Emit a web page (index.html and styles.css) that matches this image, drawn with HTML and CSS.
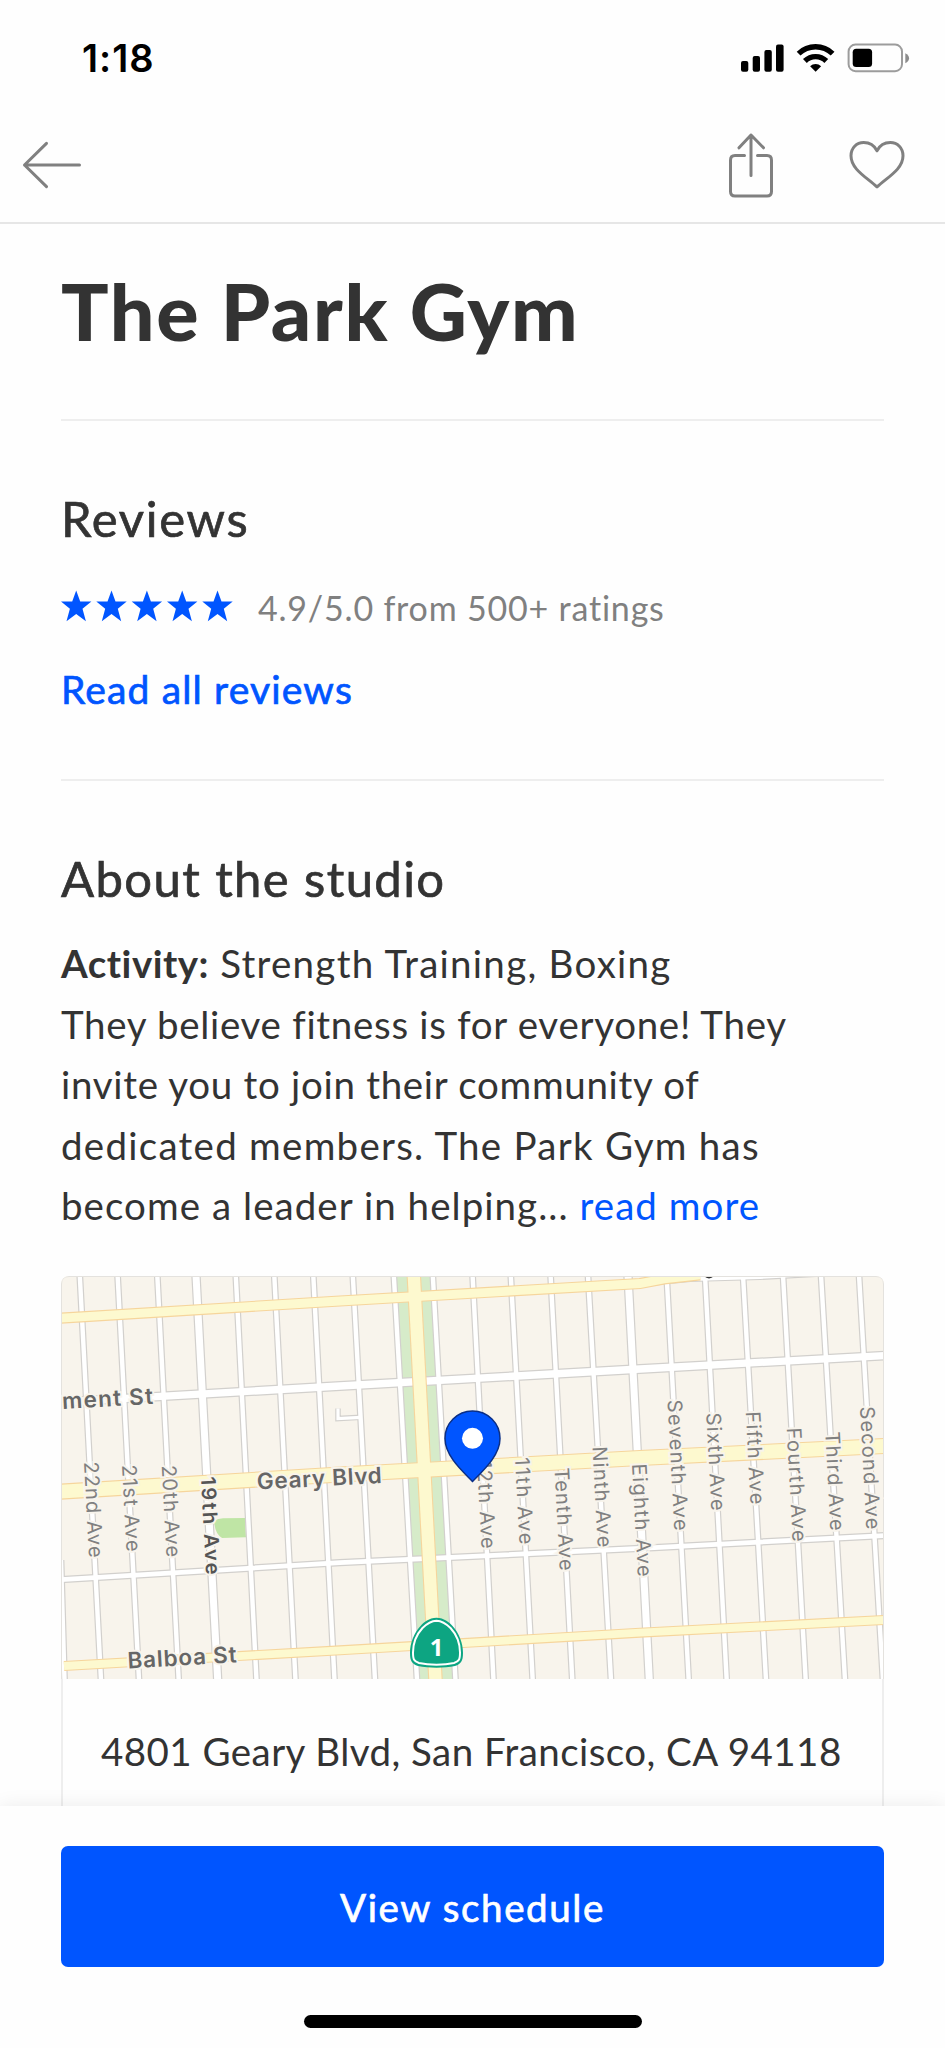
FILE: index.html
```html
<!DOCTYPE html>
<html lang="en">
<head>
<meta charset="utf-8">
<title>The Park Gym</title>
<link rel="stylesheet" href="styles.css">
</head>
<body>
<div class="screen">
  <div class="status">
    <span class="time">1:18</span>
    <svg class="indicators" width="170" height="32" viewBox="740 42 170 32">
      <rect x="741" y="61" width="7.3" height="10.7" rx="2"/>
      <rect x="752.7" y="56" width="7.3" height="15.7" rx="2"/>
      <rect x="764.4" y="50" width="7.4" height="21.7" rx="2"/>
      <rect x="776" y="44.6" width="7.6" height="27.1" rx="2"/>
      <g fill="none" stroke="#000" stroke-width="5.4">
        <path d="M798.6 53.6A24.5 24.5 0 0 1 832.6 53.6"/>
        <path d="M804.9 61A15.2 15.2 0 0 1 826.3 61"/>
      </g>
      <path d="M810.1 66.3A8 8 0 0 1 821.1 66.3L815.6 71.8Z"/>
      <rect x="848.6" y="44.6" width="53.4" height="26.6" rx="7" fill="none" stroke="#9c9c9c" stroke-width="2"/>
      <rect x="852.7" y="48.8" width="19.4" height="18.3" rx="3.5"/>
      <path d="M905.3 53.2C910.3 55.3 910.3 61.1 905.3 63.2Z" fill="#8c8c8c"/>
    </svg>
  </div>
  <header class="nav">
    <svg class="icon back" width="60" height="48" viewBox="22 142 60 48"><path d="M79.5 166H24.5M46.5 144.4L24.5 166L46.5 187.6"/></svg>
    <svg class="icon share" width="48" height="68" viewBox="727 131 48 68"><path d="M751 175.5V135M739 147.8L751 135L763.5 147.8M744.5 155.6H735Q730.5 155.6 730.5 160.2V191.5Q730.5 196 735 196H767Q771.5 196 771.5 191.5V160.2Q771.5 155.6 767 155.6H757.5"/></svg>
    <svg class="icon heart" width="60" height="52" viewBox="847 140 60 52"><path d="M877 188C867 178.5 851 170.5 851 156.8C851 149 856.5 143.6 863.7 143.6C870 143.6 874.5 147 877 151.8C879.5 147 884 143.6 890.3 143.6C897.5 143.6 903 149 903 156.8C903 170.5 887 178.5 877 188Z"/></svg>
  </header>
  <main class="content">
    <h1 class="title">The Park Gym</h1>
    <hr class="rule">
    <h2 class="heading">Reviews</h2>
    <div class="rating">
      <svg class="stars" width="172" height="32" viewBox="61 590 172 32">
        <defs><path id="star" d="M15.2 0L19.2 11H30.4L21.5 18.3L24.9 30.8L15.2 23.5L5.5 30.8L8.9 18.3L0 11H11.2Z"/></defs>
        <use href="#star" x="61" y="590.5"/><use href="#star" x="96.3" y="590.5"/><use href="#star" x="131.7" y="590.5"/><use href="#star" x="167" y="590.5"/><use href="#star" x="202.3" y="590.5"/>
      </svg>
      <span>4.9/5.0 from 500+ ratings</span>
    </div>
    <a class="all-reviews">Read all reviews</a>
    <hr class="rule">
    <h2 class="heading studio">About the studio</h2>
    <p class="about">
      <span class="line wide"><b>Activity:</b> Strength Training, Boxing</span>
      <span class="line">They believe fitness is for everyone! They</span>
      <span class="line">invite you to join their community of</span>
      <span class="line wide">dedicated members. The Park Gym has</span>
      <span class="line loose">become a leader in helping... <a>read more</a></span>
    </p>
    <section class="card">
      <svg class="map" width="823" height="403" viewBox="61 1276 823 403">
        <defs>
          <path id="avenues" d="M61 1560L64.5 1680M79.5 1270L101 1680M117.3 1270L139 1680M157 1270L178.7 1680M235.5 1270L256.5 1680M274 1270L295.5 1680M313 1270L334.5 1680M352.5 1270L375 1680M393.5 1270L417 1680M432.5 1270L455.5 1680M472.3 1270L493.5 1680M510.5 1270L532.7 1680M550.3 1270L572.3 1680M587.7 1270L611 1680M666.3 1270L688.7 1680M704.7 1270L726.7 1680M742.7 1270L766 1680M782.7 1270L805.7 1680M820.7 1270L845 1680M858.7 1270L883 1680"/>
          <path id="wide-avenues" d="M195.7 1270L217.7 1680M627.7 1270L649.3 1680"/>
          <path id="clement" d="M55 1402.5L340 1386L640 1369L890 1355.3"/>
          <path id="anza" d="M55 1580L340 1562.7L640 1548.3L890 1535.3"/>
          <path id="lake" d="M640 1283L690 1278L760 1276L890 1269"/>
          <path id="lane" d="M338 1408.5V1418.5L361 1417.3"/>
          <path id="california" d="M55 1318.5L340 1301L640 1283.5L664 1279L700 1275"/>
          <path id="geary" d="M55 1492L340 1474.5L640 1458L890 1445.7"/>
          <path id="balboa" d="M64 1666L340 1650.3L640 1632.7L890 1619.7"/>
          <path id="highway" d="M413.5 1270L435.5 1680"/>
        </defs>
        <rect x="61" y="1276" width="823" height="403" fill="#f8f4ec"/>
        <path d="M395 1270H431.5L454 1680H417Z" fill="#d6ebc9"/>
        <path d="M214 1521Q218 1518.5 223 1518.3L245 1518L246 1537.3L222 1538Q215 1534 214 1521Z" fill="#bfe5a5"/>
        <g class="edge">
          <use href="#lane" stroke-width="5.5"/><use href="#avenues" stroke-width="6.8"/><use href="#wide-avenues" stroke-width="9.4"/>
          <use href="#clement" stroke-width="9.8"/><use href="#anza" stroke-width="7.2"/><use href="#lake" stroke-width="8"/>
        </g>
        <g class="street">
          <use href="#lane" stroke-width="3.2"/><use href="#avenues" stroke-width="4.4"/><use href="#wide-avenues" stroke-width="7"/>
          <use href="#clement" stroke-width="7.3"/><use href="#anza" stroke-width="4.8"/><use href="#lake" stroke-width="5.8"/>
        </g>
        <g class="artery-edge">
          <use href="#california" stroke-width="11"/><use href="#geary" stroke-width="16"/><use href="#balboa" stroke-width="10"/><use href="#highway" stroke-width="14.5"/>
        </g>
        <g class="artery">
          <use href="#california" stroke-width="8.8"/><use href="#geary" stroke-width="13.8"/><use href="#balboa" stroke-width="7.8"/><use href="#highway" stroke-width="12.3"/>
        </g>
        <path d="M704 1276.3Q709 1280.5 714 1276.3Z" fill="#333"/>
        <path d="M61.5 1679V1284Q61.5 1276.5 69 1276.5H876Q883.5 1276.5 883.5 1284V1679" fill="none" stroke="#e4e2de"/>
        <g class="ave">
          <text textLength="96" transform="translate(84 1462) rotate(87)">22nd Ave</text>
          <text textLength="87" transform="translate(122 1465) rotate(87)">21st Ave</text>
          <text textLength="92" transform="translate(161.7 1465.5) rotate(87)">20th Ave</text>
          <text textLength="88" transform="translate(477 1461) rotate(87)">12th Ave</text>
          <text textLength="87" transform="translate(515 1457.7) rotate(87)">11th Ave</text>
          <text textLength="103" transform="translate(554.5 1468) rotate(87)">Tenth Ave</text>
          <text textLength="101" transform="translate(592.5 1446.7) rotate(87)">Ninth Ave</text>
          <text textLength="113" transform="translate(632 1464) rotate(87)">Eighth Ave</text>
          <text textLength="131" transform="translate(667.5 1400) rotate(87)">Seventh Ave</text>
          <text textLength="98" transform="translate(706.3 1413) rotate(87)">Sixth Ave</text>
          <text textLength="93" transform="translate(745.7 1411.7) rotate(87)">Fifth Ave</text>
          <text textLength="114" transform="translate(786.7 1428) rotate(87)">Fourth Ave</text>
          <text textLength="99" transform="translate(825.3 1432) rotate(87)">Third Ave</text>
          <text textLength="123" transform="translate(860 1406.7) rotate(87)">Second Ave</text>
        </g>
        <g class="major">
          <text class="dark" textLength="98" transform="translate(201 1477) rotate(87)">19th Ave</text>
          <text textLength="91" transform="translate(62.5 1409) rotate(-3.3)">ment St</text>
          <text textLength="125" transform="translate(257.3 1489.5) rotate(-3)">Geary Blvd</text>
          <text textLength="109" transform="translate(128 1668.5) rotate(-3.3)">Balboa St</text>
        </g>
        <path d="M436.5 1617.7C444 1618 449 1622 452.5 1626C459 1633 463 1643 463 1653C463 1661 461 1664 455 1666C444 1668.3 429 1668.3 418 1666C412 1664 410 1661 410 1653C410 1643 414 1633 420.5 1626C424 1622 429 1618 436.5 1617.7Z" fill="#0da582"/>
        <path d="M436.5 1620.7C443 1621 447 1624.5 450.5 1628C456.5 1634.5 460 1644 460 1652.5C460 1659.5 459 1661.5 454 1663C444 1665.2 429 1665.2 419 1663C414 1661.500 413 1659.5 413 1652.5C413 1644 416.5 1634.5 422.5 1628C426 1624.5 430 1621 436.5 1620.7Z" fill="none" stroke="#fff" stroke-width="2"/>
        <text class="route" x="436.5" y="1655.5">1</text>
        <path d="M472.5 1481.5C464 1472.5 445 1456.5 445 1438.5A27.5 27.5 0 0 1 500 1438.5C500 1456.5 481 1472.5 472.5 1481.5Z" fill="#0055ff" stroke="#0b2f86" stroke-width="1.5"/>
        <circle cx="472.5" cy="1438.3" r="10.5" fill="#fff"/>
      </svg>
      <p class="address">4801 Geary Blvd, San Francisco, CA 94118</p>
    </section>
  </main>
  <footer class="dock">
    <button class="cta">View schedule</button>
    <div class="home"></div>
  </footer>
</div>
</body>
</html>
```
FILE: styles.css
```css
* { box-sizing: border-box; }
body { margin: 0; background: #fefefe; color: #333; font-family: Lato, "Open Sans", sans-serif; }
h1, h2, p { margin: 0; font-weight: 400; }
svg { display: block; }
.screen { display: flex; flex-direction: column; width: 945px; height: 2048px; overflow: hidden; }

.status { display: flex; justify-content: space-between; align-items: center; flex: none; height: 116px; padding: 0 35px 0 82px; }
.time { font: 600 38px/44px Inter, sans-serif; letter-spacing: 1px; color: #000; }
.indicators { fill: #000; }

.nav { display: flex; align-items: center; flex: none; height: 108px; padding: 0 38px 8px 22px; border-bottom: 2px solid #e6e6e6; }
.icon { fill: none; stroke: #808080; stroke-width: 3; stroke-linecap: round; stroke-linejoin: round; }
.share { margin-left: auto; margin-right: 72px; }

.content { flex: 1; min-height: 0; overflow: hidden; padding: 42px 61px 0; }
.title { font-size: 79px; line-height: 90px; font-weight: 900; letter-spacing: 1.7px; margin-bottom: 63px; white-space: nowrap; }
.rule { height: 2px; margin: 0; border: 0; background: #eee; }
.heading { font-size: 49px; line-height: 60px; letter-spacing: 1.7px; margin-top: 67px; white-space: nowrap; -webkit-text-stroke: 0.7px; }
.studio { letter-spacing: 1.4px; }
.rating { display: flex; align-items: center; gap: 25px; margin-top: 40px; font-size: 34px; line-height: 40px; letter-spacing: 0.8px; color: #808080; white-space: nowrap; }
.stars { fill: #0055ff; margin-bottom: 4px; }
.all-reviews { display: block; margin: 37px 0 66px; font-size: 39px; line-height: 48px; letter-spacing: 1.15px; color: #0055ff; -webkit-text-stroke: 0.7px; }

.about { display: flex; flex-direction: column; margin-top: 25px; font-size: 38.5px; line-height: 60.5px; }
.about b { font-weight: 700; letter-spacing: 0.5px; }
.about a { color: #0055ff; }
.line { white-space: nowrap; letter-spacing: 0.7px; }
.wide { letter-spacing: 1.27px; }
.loose { letter-spacing: 1.05px; }

.card { margin-top: 40.5px; height: 700px; border-radius: 8px; overflow: hidden; }
.address { height: 297px; border: solid #eee; border-width: 0 2px; padding: 42px 38px 0; font-size: 38.5px; line-height: 60px; letter-spacing: 0.45px; white-space: nowrap; }

.edge, .street, .artery-edge, .artery { fill: none; }
.edge { stroke: #d2d0cd; }
.street { stroke: #fff; }
.artery-edge { stroke: #f6d59c; }
.artery { stroke: #fdf9cf; }
.ave { font: 400 20px Inter, sans-serif; fill: #808080; stroke: #f8f4ec; stroke-width: 4px; paint-order: stroke; }
.major { font: 600 22.5px Inter, sans-serif; fill: #666; stroke: #f8f4ec; stroke-width: 4px; paint-order: stroke; }
.dark { font-size: 20px; fill: #555; }
.route { font: 700 24px "Noto Sans", sans-serif; fill: #fff; text-anchor: middle; }

.dock { flex: none; position: relative; display: flex; flex-direction: column; align-items: center; height: 242px; padding: 40px 61px 0; background: #fefefe; box-shadow: 0 0 18px rgba(0, 0, 0, .08); }
.cta { width: 100%; height: 121px; border: 0; border-radius: 7px; background: #0055ff; color: #fff; font: 400 38.5px Lato, sans-serif; letter-spacing: 1.6px; -webkit-text-stroke: 0.7px; }
.home { width: 338px; height: 13px; margin-top: 48px; border-radius: 7px; background: #000; }
```
